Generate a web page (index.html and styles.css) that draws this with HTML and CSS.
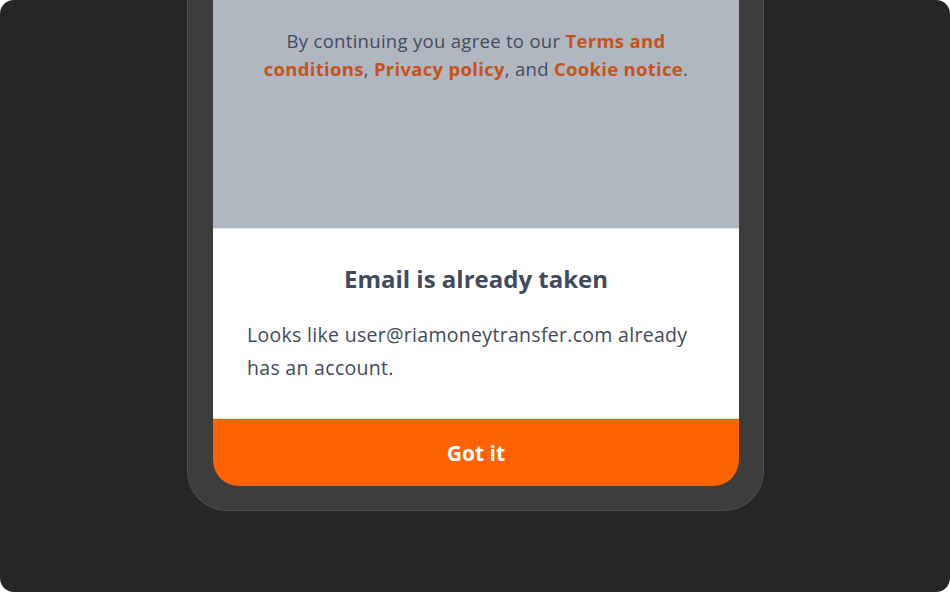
FILE: index.html
```html
<!DOCTYPE html>
<html lang="en">
<head>
<meta charset="utf-8">
<title>Email is already taken</title>
<link rel="stylesheet" href="styles.css">
</head>
<body>
<div class="canvas">
  <div class="phone">
    <div class="screen">
      <div class="backdrop">
        <p class="legal">By continuing you agree to our <a class="link" href="#">Terms and conditions</a>, <a class="link" href="#">Privacy policy</a>, and <a class="link" href="#">Cookie notice</a>.</p>
      </div>
      <div class="sheet">
        <h2 class="sheet-title">Email is already taken</h2>
        <p class="sheet-text">Looks like user@riamoneytransfer.com already has an account.</p>
      </div>
      <button class="cta" type="button">Got it</button>
    </div>
  </div>
</div>
</body>
</html>
```
FILE: styles.css
```css
* { box-sizing: border-box; }
html, body { margin: 0; padding: 0; background: #ffffff; }
body { font-family: "Open Sans", "Noto Sans", sans-serif; }
.canvas {
  width: 950px;
  height: 592px;
  background: #262626;
  border-radius: 14px;
  display: flex;
  justify-content: center;
  align-items: flex-end;
  padding-bottom: 81px;
  overflow: hidden;
}
.phone {
  width: 577px;
  margin-left: 1px;
  background: #3d3d3d;
  border: 1px solid #4a4e58;
  border-top: none;
  border-radius: 0 0 40px 40px;
  padding: 0 25px 24px;
}
.screen {
  width: 526px;
  border-radius: 0 0 26px 26px;
  overflow: hidden;
  display: flex;
  flex-direction: column;
}
.backdrop {
  height: 228px;
  background: #b1b7c0;
  padding: 27px 46px 0;
}
.legal {
  margin: 0;
  font-size: 18.5px;
  letter-spacing: 0.3px;
  line-height: 28px;
  color: #424b5d;
  text-align: center;
}
.link {
  color: #c6521a;
  font-weight: 700;
  text-decoration: none;
}
.sheet {
  background: #ffffff;
  border-top: 1px solid #e4e6ea;
  border-bottom: 1px solid #e1e3e7;
  padding: 34px 34px 34px;
  height: 191px;
}
.sheet-title {
  margin: 0 0 23px;
  font-size: 24px;
  line-height: 32px;
  font-weight: 700;
  color: #414a5c;
  text-align: center;
}
.sheet-text {
  margin: 0;
  font-size: 19.5px;
  letter-spacing: 0.3px;
  line-height: 33px;
  color: #414a5c;
}
.cta {
  height: 67px;
  border: none;
  background: #ff6200;
  color: #ffffff;
  font-family: inherit;
  font-size: 21px;
  font-weight: 700;
  padding: 0;
  margin: 0;
}
```
